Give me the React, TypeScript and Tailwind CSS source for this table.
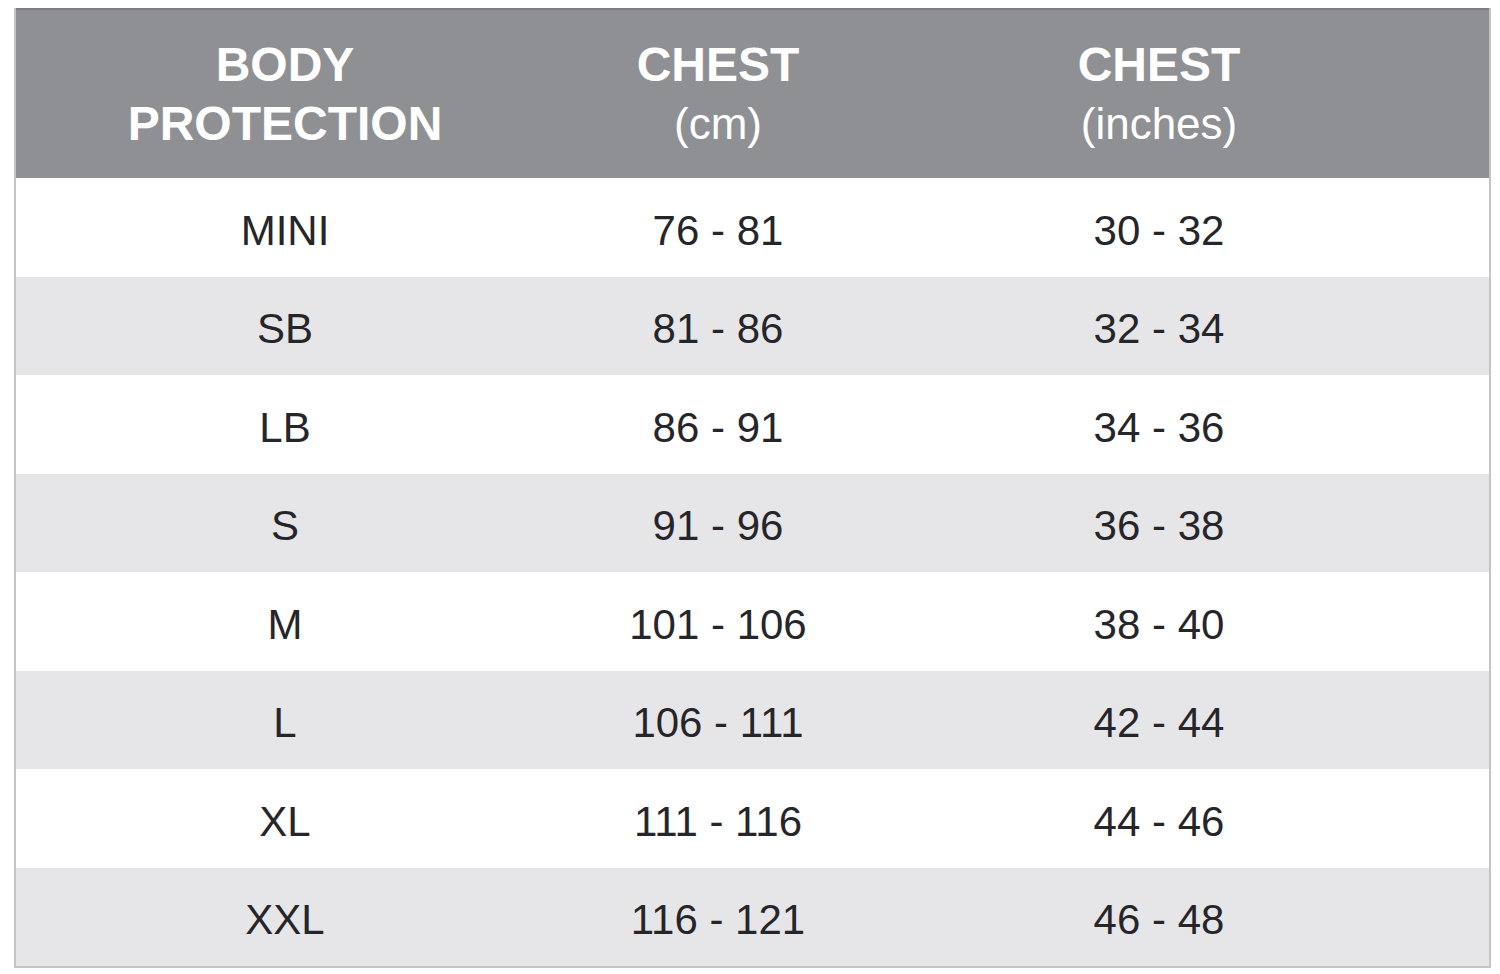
const rows = [
  ["MINI", "76 - 81", "30 - 32"],
  ["SB", "81 - 86", "32 - 34"],
  ["LB", "86 - 91", "34 - 36"],
  ["S", "91 - 96", "36 - 38"],
  ["M", "101 - 106", "38 - 40"],
  ["L", "106 - 111", "42 - 44"],
  ["XL", "111 - 116", "44 - 46"],
  ["XXL", "116 - 121", "46 - 48"],
];

const cols = "grid grid-cols-[538px_328px_554px_1fr]";

export default function App() {
  return (
    <div className="min-h-[974px] w-[1500px] bg-white pt-[8px] pl-[14px] font-['Liberation_Sans',Arial,sans-serif]">
      <div className="w-[1477px] border-x-2 border-b-2 border-[#c4c4c6]">
        <div className={`${cols} h-[170px] items-center border-t-2 border-[#7d7e82] bg-[#8f9094] text-white`}>
          <div className="text-center text-[48px] font-bold leading-[59px]">
            BODY
            <br />
            PROTECTION
          </div>
          <div className="text-center leading-[59px]">
            <div className="text-[48px] font-bold">CHEST</div>
            <div className="text-[44px]">(cm)</div>
          </div>
          <div className="text-center leading-[59px]">
            <div className="text-[48px] font-bold">CHEST</div>
            <div className="text-[44px]">(inches)</div>
          </div>
          <div />
        </div>
        {rows.map((row, i) => (
          <div
            key={row[0]}
            className={`${cols} h-[98.5px] items-center pt-[6px] text-[42px] text-[#26262a] ${i % 2 === 1 ? "bg-[#e6e6e9]" : "bg-white"}`}
          >
            <div className="text-center">{row[0]}</div>
            <div className="text-center">{row[1]}</div>
            <div className="text-center">{row[2]}</div>
            <div />
          </div>
        ))}
      </div>
    </div>
  );
}
